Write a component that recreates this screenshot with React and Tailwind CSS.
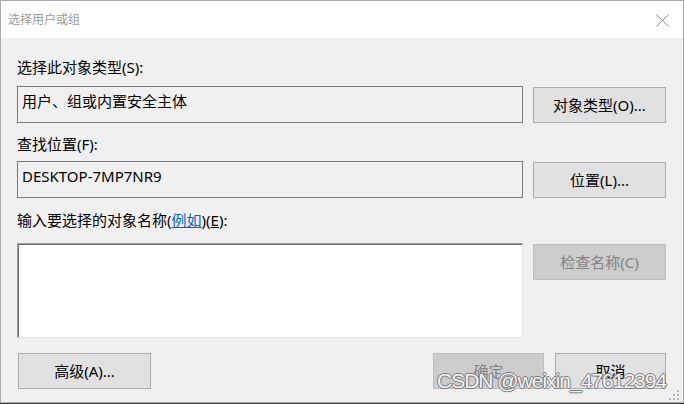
import React from "react";

const FONT = "font-['Noto_Sans','Noto_Sans_CJK_SC',sans-serif]";

function Btn({ children, disabled = false, className = "" }) {
  return (
    <button
      className={`flex h-[36px] w-[133px] items-center justify-center border text-[15px] leading-5 ${
        disabled
          ? "border-[#bfbfbf] bg-[#cccccc] text-[#838383]"
          : "border-[#adadad] bg-[#e1e1e1] text-black"
      } ${className}`}
    >
      {children}
    </button>
  );
}

function ReadBox({ children }) {
  return (
    <div className="h-[37px] w-[506px] border border-[#7a7a7a] bg-[#f0f0f0] px-[4px] pt-[4px] text-[15px] leading-5 text-black">
      {children}
    </div>
  );
}

export default function App() {
  return (
    <div className={`relative h-[404px] w-[684px] overflow-hidden bg-[#3a3a3a] ${FONT}`}>
      <div className="flex h-[403px] w-[684px] flex-col border border-[#aaaaaa] bg-[#f0f0f0]">
        {/* title bar */}
        <div className="flex h-[37px] shrink-0 items-center justify-between bg-white pl-[7px] pr-[14px]">
          <span className="text-[12px] leading-5 text-[#999999]">选择用户或组</span>
          <svg width="13" height="13" viewBox="0 0 13 13" className="mt-[1px]">
            <path d="M0.5 0.5 L12.5 12.5 M12.5 0.5 L0.5 12.5" stroke="#8f8f8f" strokeWidth="1" fill="none" />
          </svg>
        </div>

        {/* body */}
        <div className="flex flex-1 flex-col pl-[16px] pr-[17px] pt-[19px]">
          <div className="text-[15px] leading-5 text-black">选择此对象类型(S):</div>
          <div className="mt-[9px] flex items-start gap-[10px]">
            <ReadBox>用户、组或内置安全主体</ReadBox>
            <Btn className="mt-[1px]">对象类型(O)...</Btn>
          </div>

          <div className="mt-[11px] text-[15px] leading-5 text-black">查找位置(F):</div>
          <div className="mt-[7px] flex items-start gap-[10px]">
            <ReadBox>DESKTOP-7MP7NR9</ReadBox>
            <Btn className="mt-[1px]">位置(L)...</Btn>
          </div>

          <div className="mt-[12px] text-[15px] leading-5 text-black">
            输入要选择的对象名称(<span className="text-[#0066cc] underline">例如</span>)(<span className="underline">E</span>):
          </div>
          <div className="mt-[13px] flex items-start gap-[10px]">
            <div className="h-[95px] w-[506px] border border-b-[#e3e3e3] border-l-[#a0a0a0] border-r-[#e3e3e3] border-t-[#a0a0a0] bg-white shadow-[inset_1px_1px_0_#696969]" />
            <Btn disabled className="mt-[1px]">检查名称(C)</Btn>
          </div>

          <div className="mt-[15px] flex items-start">
            <Btn className="ml-[1px]">高级(A)...</Btn>
            <div className="flex-1" />
            <Btn disabled className="!w-[111px]">确定</Btn>
            <Btn className="ml-[11px] !w-[111px]">取消</Btn>
          </div>
        </div>
      </div>

      {/* resize grip */}
      <svg width="12" height="12" viewBox="0 0 12 12" className="absolute left-[669px] top-[390px]">
        <rect x="8" y="0" width="2" height="2" fill="#b5b5b5" />
        <rect x="4" y="4" width="2" height="2" fill="#b5b5b5" />
        <rect x="8" y="4" width="2" height="2" fill="#b5b5b5" />
        <rect x="0" y="8" width="2" height="2" fill="#b5b5b5" />
        <rect x="4" y="8" width="2" height="2" fill="#b5b5b5" />
        <rect x="8" y="8" width="2" height="2" fill="#b5b5b5" />
      </svg>

      {/* watermark */}
      <div className="absolute left-[437px] top-[369px] whitespace-nowrap font-['Liberation_Sans',sans-serif] text-[21px] leading-6 tracking-[-1px] text-[#f4f4f4] [text-shadow:1px_0_0_#7a7a7a,-1px_0_0_#7a7a7a,0_1px_0_#7a7a7a,0_-1px_0_#7a7a7a]">
        CSDN @weixin_47612394
      </div>
    </div>
  );
}
